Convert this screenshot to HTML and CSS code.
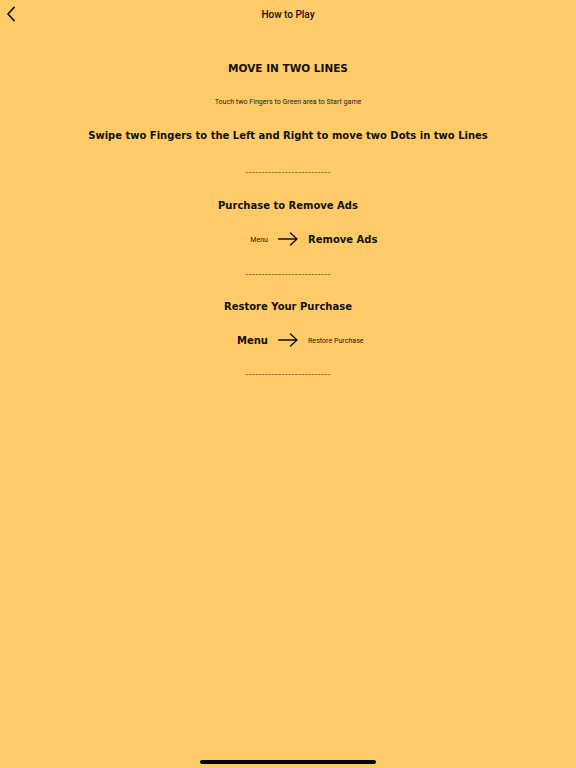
FILE: index.html
```html
<!DOCTYPE html>
<html>
<head>
<meta charset="utf-8">
<link rel="stylesheet" href="styles.css">
</head>
<body>
<div class="screen">
  <header class="nav">
    <svg class="back" width="10" height="16" viewBox="0 0 10 16"><path d="M8 1.5 L2 8 L8 14.5" fill="none" stroke="#111" stroke-width="1.8" stroke-linecap="round" stroke-linejoin="round"/></svg>
    <div class="nav-title">How to Play</div>
  </header>
  <main class="content">
    <h1 class="h-main">MOVE IN TWO LINES</h1>
    <p class="small touch">Touch two Fingers to Green area to Start game</p>
    <p class="h-swipe">Swipe two Fingers to the Left and Right to move two Dots in two Lines</p>
    <div class="dashes d1">--------------------------</div>
    <h2 class="h-sec s1">Purchase to Remove Ads</h2>
    <div class="row r1">
      <span class="left small">Menu</span>
      <svg class="arrow" width="20" height="14" viewBox="0 0 20 14"><path d="M0.5 7 H19 M12.5 1 L19 7 L12.5 13" fill="none" stroke="#111" stroke-width="1.4" stroke-linecap="round" stroke-linejoin="round"/></svg>
      <span class="right bold">Remove Ads</span>
    </div>
    <div class="dashes d2">--------------------------</div>
    <h2 class="h-sec s2">Restore Your Purchase</h2>
    <div class="row r2">
      <span class="left bold">Menu</span>
      <svg class="arrow" width="20" height="14" viewBox="0 0 20 14"><path d="M0.5 7 H19 M12.5 1 L19 7 L12.5 13" fill="none" stroke="#111" stroke-width="1.4" stroke-linecap="round" stroke-linejoin="round"/></svg>
      <span class="right small">Restore Purchase</span>
    </div>
    <div class="dashes d3">--------------------------</div>
  </main>
  <div class="home"></div>
</div>
</body>
</html>
```
FILE: styles.css
```css
html, body {
  margin: 0;
  padding: 0;
  background: #ffcb69;
}
.screen {
  width: 576px;
  height: 768px;
  position: relative;
  overflow: hidden;
  background: #ffcb69;
  color: #111;
  font-family: Roboto, Inter, "Liberation Sans", sans-serif;
}
.nav {
  height: 28px;
  display: flex;
  align-items: center;
  justify-content: center;
  position: relative;
}
.back {
  position: absolute;
  left: 6px;
  top: 6px;
}
.nav-title {
  font-size: 10px;
  font-weight: 500;
  margin-top: 1px;
}
.content {
  display: flex;
  flex-direction: column;
  align-items: center;
  text-align: center;
}
.h-main {
  font-family: "DejaVu Sans", Verdana, sans-serif;
  font-weight: bold;
  font-size: 10.5px;
  margin: 32px 0 0;
  line-height: 16px;
}
.small {
  font-size: 7.1px;
  color: #222;
}
.touch {
  margin: 21px 0 0;
  line-height: 10px;
}
.h-swipe {
  font-family: "DejaVu Sans", Verdana, sans-serif;
  font-weight: bold;
  font-size: 10px;
  line-height: 16px;
  margin: 21px 0 0;
}
.dashes {
  font-family: Inter, Roboto, sans-serif;
  font-size: 7px;
  line-height: 8px;
  letter-spacing: 0.08px;
  color: #333;
}
.d1 { margin-top: 25px; }
.d2 { margin-top: 24px; }
.d3 { margin-top: 23px; }
.h-sec {
  font-family: "DejaVu Sans", Verdana, sans-serif;
  font-weight: bold;
  font-size: 10px;
  line-height: 16px;
  margin: 0;
}
.s1 { margin-top: 21px; }
.s2 { margin-top: 20px; }
.row {
  width: 100%;
  display: grid;
  grid-template-columns: 1fr auto 1fr;
  column-gap: 10px;
  align-items: center;
  height: 16px;
}
.r1 { margin-top: 17px; }
.r2 { margin-top: 17px; }
.row .left { text-align: right; }
.row .right { text-align: left; }
.bold {
  font-family: "DejaVu Sans", Verdana, sans-serif;
  font-weight: bold;
  font-size: 10px;
}
.arrow { display: block; }
.home {
  position: absolute;
  left: 200px;
  bottom: 4px;
  width: 176px;
  height: 4px;
  border-radius: 2px;
  background: #000;
}
```
